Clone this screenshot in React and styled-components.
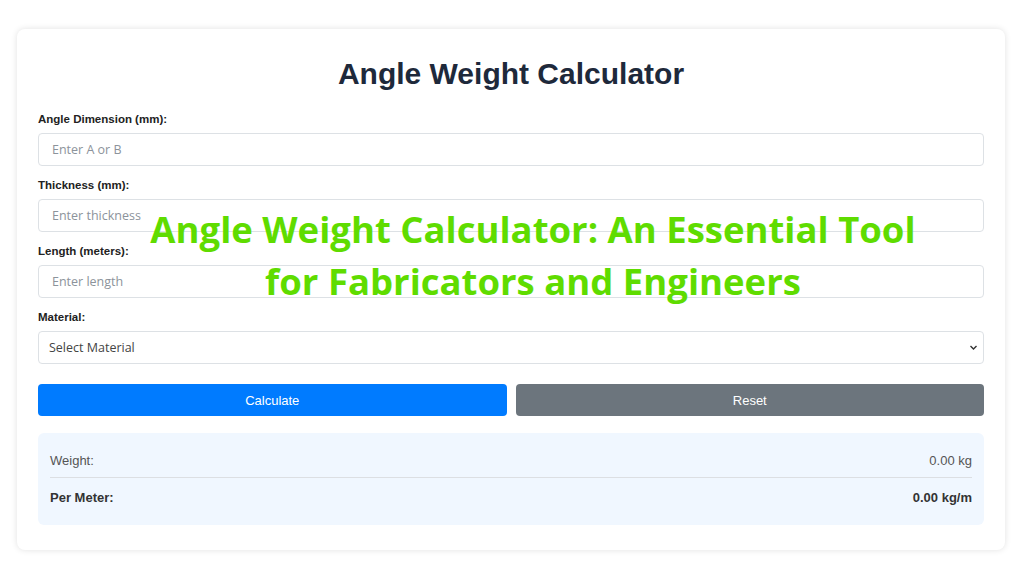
import styled, { createGlobalStyle } from 'styled-components';

const GlobalStyle = createGlobalStyle`
  html, body {
    margin: 0;
    padding: 0;
    background: #ffffff;
  }
  body {
    font-family: "Liberation Sans", Arial, sans-serif;
  }
`;

const Page = styled.div`
  position: relative;
  width: 1024px;
  height: 576px;
  padding: 29px 19px 0 17px;
  box-sizing: border-box;
`;

const Card = styled.div`
  background: #fff;
  border-radius: 8px;
  box-shadow: 0 0 6px rgba(0, 0, 0, 0.12);
  padding: 26px 21px 26px 21px;
  height: 521px;
  box-sizing: border-box;
  display: flex;
  flex-direction: column;
`;

const Title = styled.h1`
  margin: 0 0 20px;
  text-align: center;
  font-size: 30px;
  font-weight: 700;
  color: #1e293b;
  line-height: 38px;
`;

const Field = styled.div`
  display: flex;
  flex-direction: column;
  margin-bottom: 13px;
`;

const Label = styled.label`
  font-size: 11.5px;
  font-weight: 700;
  color: #222;
  margin-bottom: 7px;
  line-height: 13px;
`;

const Input = styled.input`
  height: 33px;
  box-sizing: border-box;
  border: 1px solid #dde1e5;
  border-radius: 4px;
  padding: 0 13px;
  font-family: "Open Sans", sans-serif;
  font-size: 12.5px;
  color: #333;
  outline: none;
  &::placeholder {
    color: #8c939b;
  }
`;

const SelectWrap = styled.div`
  position: relative;
`;

const Select = styled.select`
  width: 100%;
  height: 33px;
  box-sizing: border-box;
  border: 1px solid #dde1e5;
  border-radius: 4px;
  padding: 0 10px;
  font-family: "Open Sans", sans-serif;
  font-size: 12.5px;
  color: #444;
  background: #fff;
  appearance: none;
  outline: none;
`;

const Chevron = styled.svg`
  position: absolute;
  right: 6px;
  top: 13px;
  pointer-events: none;
`;

const Buttons = styled.div`
  display: grid;
  grid-template-columns: 1fr 1fr;
  gap: 9px;
  margin-top: 7px;
`;

const Button = styled.button`
  height: 32px;
  border: none;
  border-radius: 4px;
  color: #fff;
  font-family: "Liberation Sans", Arial, sans-serif;
  font-size: 13px;
  background: ${(p) => (p.$variant === 'secondary' ? '#6c757d' : '#007bff')};
`;

const Result = styled.div`
  margin-top: 17px;
  background: #f0f7ff;
  border-radius: 6px;
  padding: 11px 12px 9px 12px;
  display: flex;
  flex-direction: column;
`;

const Row = styled.div`
  display: flex;
  justify-content: space-between;
  align-items: center;
  height: ${(p) => (p.$bold ? '38px' : '33px')};
  font-size: 13px;
  color: ${(p) => (p.$bold ? '#333' : '#555')};
  font-weight: ${(p) => (p.$bold ? 700 : 400)};
  border-bottom: ${(p) => (p.$divider ? '1px solid #dcdfe3' : 'none')};
`;

const Overlay = styled.div`
  position: absolute;
  left: 42px;
  right: 0;
  top: 203px;
  text-align: center;
  font-family: "Open Sans", sans-serif;
  font-weight: 700;
  font-size: 36.5px;
  line-height: 52px;
  color: #5fdc00;
  pointer-events: none;
`;

export default function App() {
  return (
    <>
      <GlobalStyle />
      <Page>
        <Card>
          <Title>Angle Weight Calculator</Title>
          <Field>
            <Label>Angle Dimension (mm):</Label>
            <Input placeholder="Enter A or B" />
          </Field>
          <Field>
            <Label>Thickness (mm):</Label>
            <Input placeholder="Enter thickness" />
          </Field>
          <Field>
            <Label>Length (meters):</Label>
            <Input placeholder="Enter length" />
          </Field>
          <Field>
            <Label>Material:</Label>
            <SelectWrap>
              <Select defaultValue="">
                <option value="">Select Material</option>
              </Select>
              <Chevron width="9" height="7" viewBox="0 0 9 7">
                <path d="M1.5 2 L4.5 5 L7.5 2" fill="none" stroke="#333" strokeWidth="1.4" />
              </Chevron>
            </SelectWrap>
          </Field>
          <Buttons>
            <Button>Calculate</Button>
            <Button $variant="secondary">Reset</Button>
          </Buttons>
          <Result>
            <Row $divider>
              <span>Weight:</span>
              <span>0.00 kg</span>
            </Row>
            <Row $bold>
              <span>Per Meter:</span>
              <span>0.00 kg/m</span>
            </Row>
          </Result>
        </Card>
        <Overlay>
          Angle Weight Calculator: An Essential Tool
          <br />
          for Fabricators and Engineers
        </Overlay>
      </Page>
    </>
  );
}
